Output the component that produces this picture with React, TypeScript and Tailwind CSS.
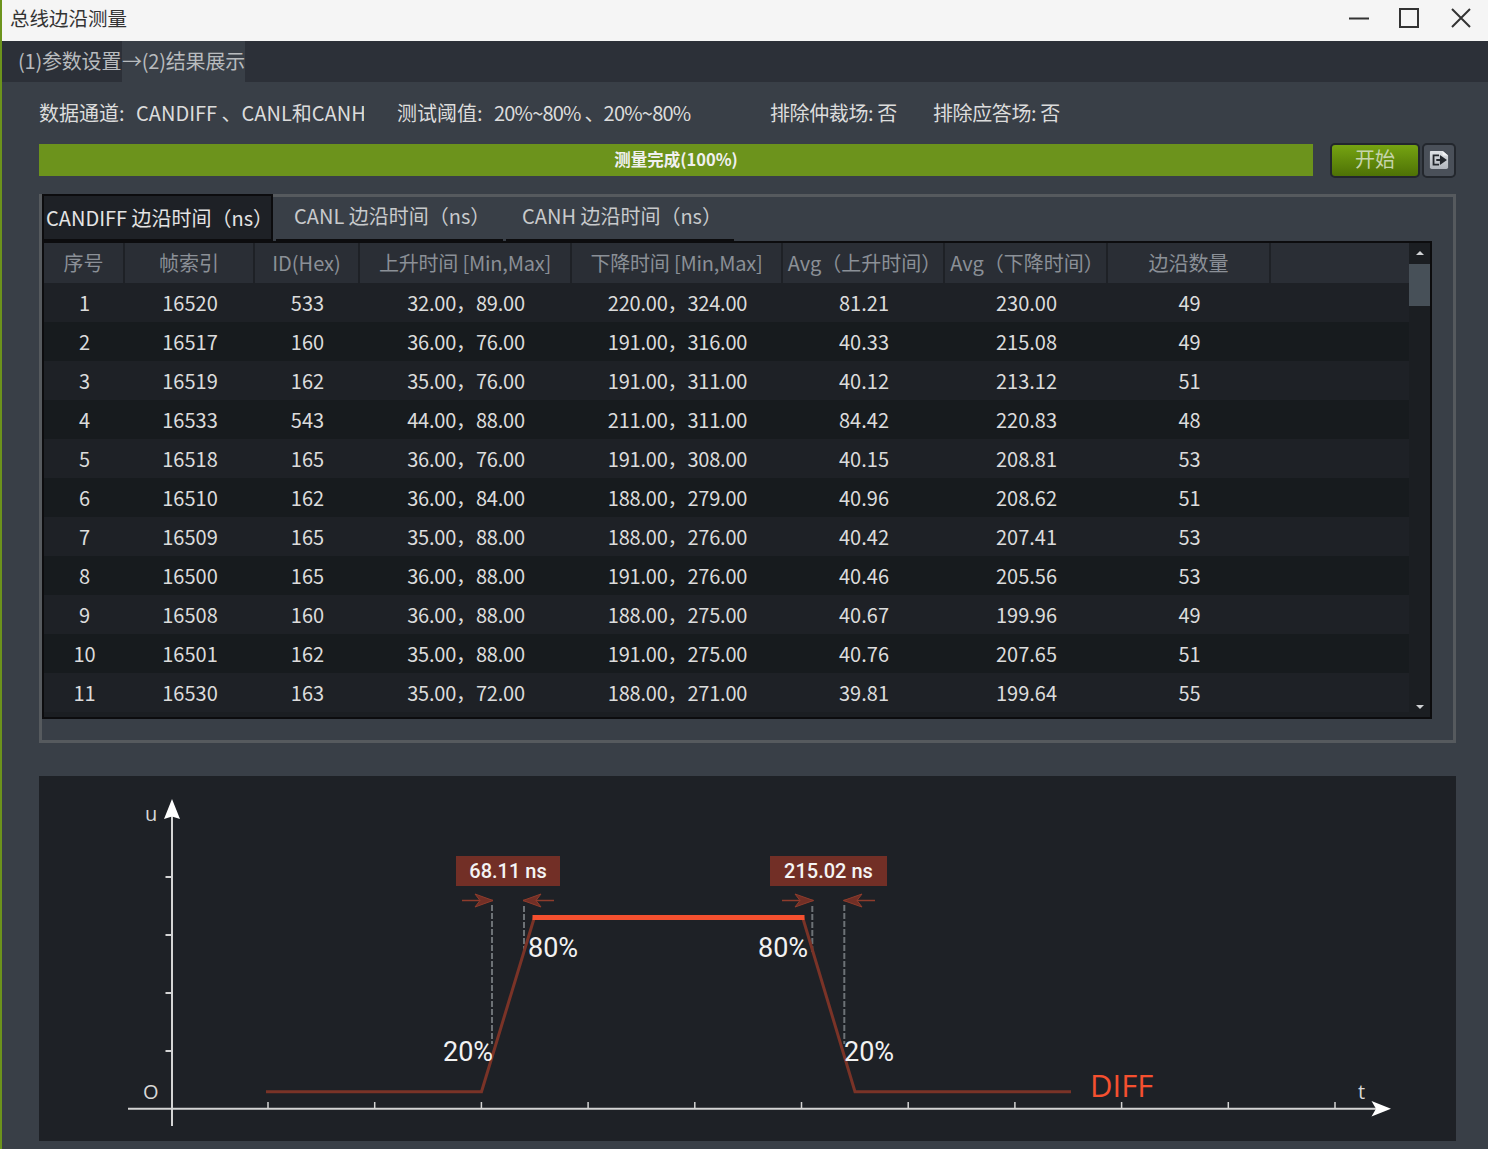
const ROWS = [
  ['1', '16520', '533', '32.00，89.00', '220.00，324.00', '81.21', '230.00', '49'],
  ['2', '16517', '160', '36.00，76.00', '191.00，316.00', '40.33', '215.08', '49'],
  ['3', '16519', '162', '35.00，76.00', '191.00，311.00', '40.12', '213.12', '51'],
  ['4', '16533', '543', '44.00，88.00', '211.00，311.00', '84.42', '220.83', '48'],
  ['5', '16518', '165', '36.00，76.00', '191.00，308.00', '40.15', '208.81', '53'],
  ['6', '16510', '162', '36.00，84.00', '188.00，279.00', '40.96', '208.62', '51'],
  ['7', '16509', '165', '35.00，88.00', '188.00，276.00', '40.42', '207.41', '53'],
  ['8', '16500', '165', '36.00，88.00', '191.00，276.00', '40.46', '205.56', '53'],
  ['9', '16508', '160', '36.00，88.00', '188.00，275.00', '40.67', '199.96', '49'],
  ['10', '16501', '162', '35.00，88.00', '191.00，275.00', '40.76', '207.65', '51'],
  ['11', '16530', '163', '35.00，72.00', '188.00，271.00', '39.81', '199.64', '55'],
]

const COLS = [
  { label: '序号', w: 'w-[81px]' },
  { label: '帧索引', w: 'w-[130px]' },
  { label: 'ID(Hex)', w: 'w-[105px]' },
  { label: '上升时间 [Min,Max]', w: 'w-[212px] tracking-[-0.2px]' },
  { label: '下降时间 [Min,Max]', w: 'w-[211px] tracking-[-0.2px]' },
  { label: 'Avg（上升时间）', w: 'w-[162px]', head: 'pl-[3px]' },
  { label: 'Avg（下降时间）', w: 'w-[163px]', head: 'pl-[3px]' },
  { label: '边沿数量', w: 'w-[163px]' },
]

const X_TICKS = [268, 374.7, 481.4, 588.1, 694.8, 801.5, 908.2, 1014.9, 1121.6, 1228.3, 1335]
const Y_TICKS = [877, 935, 993, 1051]

function TitleBar() {
  return (
    <div className="h-[41px] bg-[#f5f5f5] flex items-center pl-[8px] pb-[6px] text-[19.5px] text-[#333]">
      <span className="flex-1">总线边沿测量</span>
      <svg width="140" height="30" viewBox="0 0 140 30" fill="none">
        <path d="M1 15.5H21" stroke="#333" strokeWidth="2" />
        <rect x="52" y="6" width="18" height="18" stroke="#333" strokeWidth="2" />
        <path d="M104 6L122 24M122 6L104 24" stroke="#333" strokeWidth="2" />
      </svg>
    </div>
  )
}

function ExportIcon() {
  return (
    <svg width="20" height="20" viewBox="0 0 22 22">
      <defs>
        <linearGradient id="doc" x1="0" y1="0" x2="0" y2="1">
          <stop offset="0" stopColor="#dfe2e6" />
          <stop offset="1" stopColor="#b0b5bc" />
        </linearGradient>
      </defs>
      <path d="M2 1H15L21 6V19Q21 21 19 21H3Q1 21 1 19V2Q1 1 2 1Z" fill="url(#doc)" />
      <path d="M15 1L21 6H15Z" fill="#f2f3f5" />
      <path d="M11 6H5V16H11" fill="none" stroke="#23272d" strokeWidth="2" />
      <path d="M8 11H14M13 7.5L18 11L13 14.5Z" fill="#23272d" stroke="#23272d" strokeWidth="2" />
    </svg>
  )
}

function Tabs() {
  return (
    <div className="flex h-[44px] text-[20px]">
      <div className="w-[231px] -mt-[3px] h-[47px] bg-[#1e2126] border-2 border-[#0c0c0e] flex items-center pl-[2px] text-[#e4e4e4] whitespace-nowrap">
        CANDIFF 边沿时间（ns）
      </div>
      <div className="ml-[3px] w-[227px] pb-[4px] border-b-2 border-[#0c0c0e] flex items-center pl-[18px] text-[#c8cacc] whitespace-nowrap">
        CANL 边沿时间（ns）
      </div>
      <div className="ml-[3px] w-[228px] pb-[4px] border-b-2 border-[#0c0c0e] flex items-center pl-[16px] text-[#c8cacc] whitespace-nowrap">
        CANH 边沿时间（ns）
      </div>
    </div>
  )
}

function Table() {
  return (
    <div className="mr-[21px] h-[478px] border-2 border-[#0c0c0e] bg-[#1b1e22] flex overflow-hidden">
      <div className="flex-1 min-w-0">
        <div className="flex h-[40px] bg-[#2a2e35] text-[#8b9097]">
          {COLS.map((c) => (
            <div key={c.label} className={`${c.w} ${c.head ?? ''} border-r-2 border-[#1e2126] flex items-center justify-center whitespace-nowrap`}>
              {c.label}
            </div>
          ))}
        </div>
        {ROWS.map((r, i) => (
          <div key={r[0]} className={`flex h-[39px] text-[#dcdcdc] ${i % 2 === 0 ? 'bg-[#1e2126]' : 'bg-[#171b1e]'}`}>
            {r.map((v, j) => (
              <div key={j} className={`${COLS[j].w} flex items-center justify-center whitespace-nowrap`}>
                {v}
              </div>
            ))}
          </div>
        ))}
      </div>
      <div className="w-[21px] flex flex-col items-center">
        <div className="h-[21px] pb-[2px] flex items-center justify-center">
          <div className="w-0 h-0 border-x-[4px] border-x-transparent border-b-[4px] border-b-[#d0d2d4]" />
        </div>
        <div className="w-full h-[42px] bg-[#475058]" />
        <div className="flex-1" />
        <div className="h-[20px] flex items-center justify-center">
          <div className="w-0 h-0 border-x-[4px] border-x-transparent border-t-[4px] border-t-[#d0d2d4]" />
        </div>
      </div>
    </div>
  )
}

function Arrow({ tip, from, back, notch }: { tip: number; from: number; back: number; notch: number }) {
  return (
    <g>
      <path d={`M${from} 900.5H${tip}`} stroke="#8f3c2c" strokeWidth="1.5" />
      <path d={`M${tip} 900.5L${back} 894L${notch} 900.5L${back} 907Z`} fill="#722f26" stroke="#8f3c2c" strokeWidth="1" />
    </g>
  )
}

function Diagram() {
  return (
    <svg viewBox="39 776 1417 365" className="block w-[1417px] h-[365px] bg-[#1e2126]" style={{ fontFamily: 'Roboto, sans-serif' }}>
      <path d="M172 815V1126M128 1108.7H1378" stroke="#d4d4d4" strokeWidth="2" fill="none" />
      <path d="M172 799L180 819L172 816.5L164 819Z" fill="#fff" />
      <path d="M1391 1108.7L1371.5 1101L1376 1108.7L1371.5 1116.5Z" fill="#fff" />
      {Y_TICKS.map((y) => (
        <path key={y} d={`M165.5 ${y}H172`} stroke="#d4d4d4" strokeWidth="2" />
      ))}
      {X_TICKS.map((x) => (
        <path key={x} d={`M${x} 1102V1108`} stroke="#d4d4d4" strokeWidth="1.5" />
      ))}

      <path d="M492 905V1044M844.3 905V1044M524 906V953M812.3 906V953" stroke="#6d7276" strokeWidth="2" strokeDasharray="6 2" fill="none" />
      <path d="M266 1091.7H481.5L534.5 917M802.5 917L855 1091.7H1071" stroke="#7a3327" strokeWidth="3" fill="none" />
      <path d="M532.5 917.5H804.5" stroke="#f5502f" strokeWidth="5" />

      <Arrow from={462} tip={493} back={475} notch={480} />
      <Arrow from={554} tip={523} back={541} notch={536} />
      <Arrow from={782} tip={813.5} back={795} notch={800} />
      <Arrow from={875} tip={843.5} back={862} notch={857} />

      <rect x="456" y="856" width="104" height="30" fill="#722f26" />
      <rect x="770" y="856" width="117" height="30" fill="#722f26" />
      <text x="508" y="878" textAnchor="middle" fontSize="20" fontWeight="500" fill="#f4f4f4">68.11 ns</text>
      <text x="828.5" y="878" textAnchor="middle" fontSize="20" fontWeight="500" fill="#f4f4f4">215.02 ns</text>

      <g fontSize="27" fill="#f2f2f2">
        <text x="528" y="957">80%</text>
        <text x="758" y="957">80%</text>
        <text x="443" y="1061">20%</text>
        <text x="844" y="1061">20%</text>
      </g>
      <g fontSize="20" fill="#d8d8d8" style={{ fontFamily: '"Open Sans", sans-serif' }}>
        <text x="145" y="821">u</text>
        <text x="143" y="1099">O</text>
        <text x="1358" y="1099">t</text>
      </g>
      <text x="1090" y="1097" fontSize="31" fill="#f5502f" style={{ fontFamily: '"Open Sans", sans-serif' }}>DIFF</text>
    </svg>
  )
}

export default function App() {
  return (
    <div className="w-[1488px] h-[1149px] overflow-hidden bg-[#393f47] border-l-2 border-[#6c931c] text-[20px] leading-none [text-spacing-trim:space-all]" style={{ fontFamily: '"Noto Sans CJK SC", "Noto Sans", sans-serif' }}>
      <TitleBar />
      <div className="h-[41px] bg-[#2c3038] flex text-[#b8bbbe] tracking-[-0.2px]">
        <div className="w-[120px] pl-[16px] pb-[2px] flex items-center whitespace-nowrap">(1)参数设置</div>
        <div className="w-[123px] pb-[2px] bg-[#393f47] flex items-center whitespace-nowrap">→(2)结果展示</div>
      </div>

      <div className="pl-[37px] pr-[32px]">
        <div className="h-[61px] flex items-center text-[#dcdcdc] whitespace-nowrap">
          <span className="w-[97px]">数据通道:</span>
          <span className="w-[228px] overflow-hidden">CANDIFF 、CANL和CANH</span>
          <span className="w-[33px]" />
          <span className="w-[97px]">测试阈值:</span>
          <span className="w-[276px] tracking-[-0.8px]">20%~80% 、20%~80%</span>
          <span className="w-[163px] tracking-[-0.4px]">排除仲裁场: 否</span>
          <span className="tracking-[-0.4px]">排除应答场: 否</span>
        </div>

        <div className="flex items-center h-[34px]">
          <div className="w-[1274px] h-[32px] pb-[1px] bg-[#6c931c] flex items-center justify-center text-[16.5px] font-bold text-[#f0f0f0]">
            测量完成(100%)
          </div>
          <button className="ml-[17px] w-[90px] h-[35px] pb-[3px] rounded-[5px] border-2 border-[#23272d] bg-gradient-to-b from-[#76a412] to-[#4e7206] text-[#c6d4ad]">
            开始
          </button>
          <button className="ml-[2px] w-[34px] h-[35px] rounded-[5px] border-2 border-[#23272d] bg-[#4a5059] flex items-center justify-center">
            <ExportIcon />
          </button>
        </div>

        <div className="mt-[17px] h-[549px] border-[3px] border-[#565a5e]">
          <Tabs />
          <Table />
        </div>

        <div className="mt-[33px]">
          <Diagram />
        </div>
      </div>
    </div>
  )
}
